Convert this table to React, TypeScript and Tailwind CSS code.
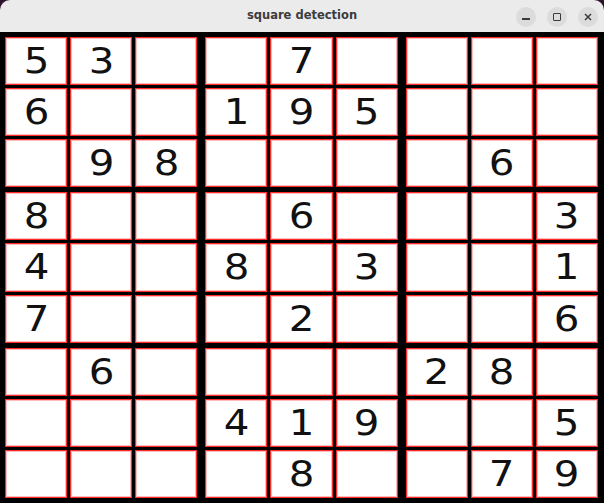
const puzzle = [
  '53..7....',
  '6..195...',
  '.98....6.',
  '8...6...3',
  '4..8.3..1',
  '7...2...6',
  '.6....28.',
  '...419..5',
  '....8..79',
]

function Cell({ value }: { value: string }) {
  return (
    <div className="flex-1 flex items-center justify-center bg-white border border-[#ff2a2a] shadow-[inset_0_0_0_1px_#ffbcbc] text-[36px] leading-none text-[#111] font-['DejaVu_Sans',sans-serif]">
      {value !== '.' && <span className="inline-block scale-x-[1.12]">{value}</span>}
    </div>
  )
}

function Box({ br, bc }: { br: number; bc: number }) {
  return (
    <div className="flex-1 flex flex-col gap-[3px]">
      {[0, 1, 2].map(r => (
        <div key={r} className="flex-1 flex gap-[3px]">
          {[0, 1, 2].map(c => (
            <Cell key={c} value={puzzle[br * 3 + r][bc * 3 + c]} />
          ))}
        </div>
      ))}
    </div>
  )
}

export default function App() {
  return (
    <div className="w-[604px] h-[503px] bg-[#2c1328] flex flex-col">
      {/* Title bar */}
      <div className="h-[32px] shrink-0 relative flex items-center justify-center bg-[#ebebeb] rounded-t-[10px]">
        <span className="text-[11.5px] font-bold text-[#3c3c3c] font-['DejaVu_Sans',sans-serif]">
          square detection
        </span>
        <div className="absolute right-[6px] top-[7px] flex gap-[11px]">
          <div className="w-[20px] h-[20px] rounded-full bg-[#dcdcdc] flex items-center justify-center">
            <div className="w-[8px] h-[1.5px] bg-[#3a3a3a] mt-[4px]" />
          </div>
          <div className="w-[20px] h-[20px] rounded-full bg-[#dcdcdc] flex items-center justify-center">
            <div className="w-[8px] h-[8px] border-[1.5px] border-[#3a3a3a] rounded-[1px]" />
          </div>
          <div className="w-[20px] h-[20px] rounded-full bg-[#dcdcdc] flex items-center justify-center">
            <svg width="8" height="8" viewBox="0 0 8 8">
              <path d="M1 1L7 7M7 1L1 7" stroke="#3a3a3a" strokeWidth="1.5" />
            </svg>
          </div>
        </div>
      </div>

      {/* Sudoku grid */}
      <div className="flex-1 bg-black pl-[5px] pr-[6px] pt-[5px] pb-[5px] flex flex-col gap-[5px]">
        {[0, 1, 2].map(br => (
          <div key={br} className="flex-1 flex gap-[8px]">
            {[0, 1, 2].map(bc => (
              <Box key={bc} br={br} bc={bc} />
            ))}
          </div>
        ))}
      </div>
    </div>
  )
}
